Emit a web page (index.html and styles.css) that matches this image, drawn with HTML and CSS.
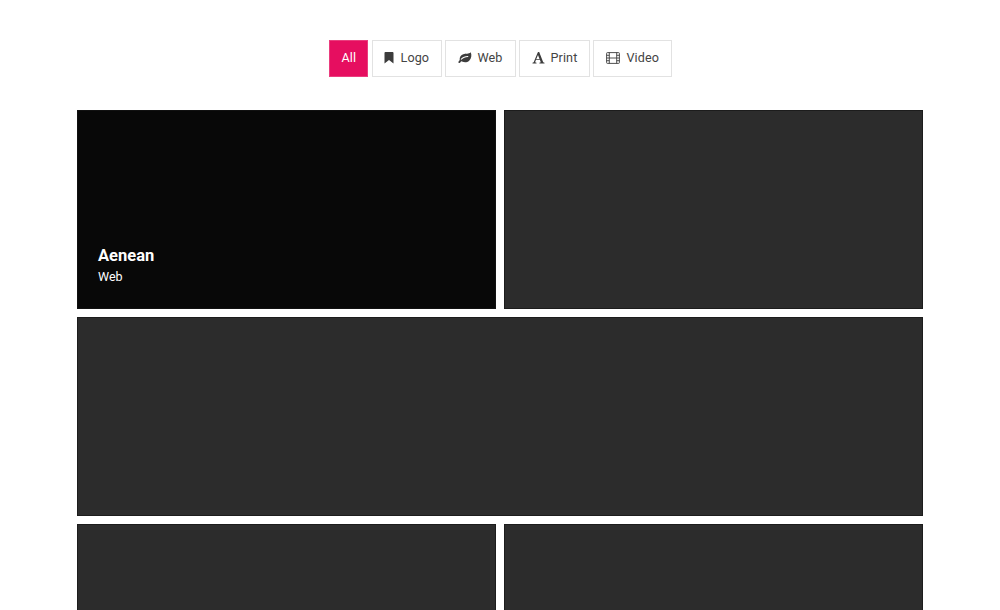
FILE: index.html
```html
<!DOCTYPE html>
<html lang="en">
<head>
<meta charset="utf-8">
<title>Portfolio</title>
<link rel="stylesheet" href="styles.css">
</head>
<body>
<main class="portfolio">
  <nav class="filters">
    <button class="filter filter-all active">All</button>
    <button class="filter filter-logo"><svg class="icon" width="10" height="12" viewBox="0 0 10 12"><path d="M1.400 0h7.200Q9.500 0 9.500 1v10.600L5 8 .5 11.600V1Q.5 0 1.400 0z"/></svg>Logo</button>
    <button class="filter filter-web"><svg class="icon" width="14" height="12" viewBox="0 0 14 12"><path fill-rule="evenodd" d="M12.700.3C13.900 2.800 13.600 6.600 11.200 8.700 9.400 10.300 6.800 10.700 4.600 9.800L3.500 9.300c-.7.300-1.300 1.500-2 1.700-.6.1-1.200-.4-1.100-1 .1-.7 1.100-1.200 1.300-1.900C1.300 5 3 2.900 5.300 2.200 7.700 1.500 10.600 2.400 12.700.3zM3.600 7.500c2-1.700 3.400-2.400 6.300-2.600.7-.1.700-.9 0-.9C6.800 4.100 5 4.900 3 6.800c-.6.6.1 1.200.6.700z"/></svg>Web</button>
    <button class="filter filter-print"><svg class="icon" width="13" height="12" viewBox="0 0 13 12"><path fill-rule="evenodd" d="M6 0h1.200l4 10.200 1.300.5V11.400H7.400v-.7l1.400-.4-.9-2.600H4l-.9 2.500 1.400.5v.7H.5v-.7l1.200-.5L5.300 1.600zM6 2.900 4.300 7h3.200z"/></svg>Print</button>
    <button class="filter filter-video"><svg class="icon" width="14" height="12" viewBox="0 0 14 12"><g class="outline"><rect x=".6" y=".6" width="12.800" height="10.800" rx=".8"/><path d="M3.300.6v10.800M10.700.6v10.800M3.300 6h7.400M.6 3.300h2.700M.6 6h2.700M.6 8.700h2.700M10.700 3.300h2.700M10.700 6h2.700M10.700 8.700h2.700"/></g></svg>Video</button>
  </nav>
  <section class="gallery">
    <article class="tile tile-hover"><h3 class="tile-title">Aenean</h3><p class="tile-category">Web</p></article>
    <article class="tile"></article>
    <article class="tile tile-wide"></article>
    <article class="tile tile-cut"></article>
    <article class="tile tile-cut"></article>
  </section>
</main>
</body>
</html>
```
FILE: styles.css
```css
* { box-sizing: border-box; }
body {
  margin: 0;
  background: #fff;
  color: #444;
  font-family: Roboto, "Liberation Sans", sans-serif;
}
.portfolio { width: 846px; margin: 0 auto; padding-top: 40px; }
.filters { display: flex; justify-content: center; gap: 3px; height: 37px; }
.filter {
  display: flex;
  align-items: center;
  justify-content: flex-start;
  padding: 0 0 1px 12px;
  height: 37px;
  border: 1px solid #e2e2e2;
  background: #fff;
  color: #444;
  font: 400 12.600px/18px Roboto, "Liberation Sans", sans-serif;
  letter-spacing: .1px;
}
.filter-all { width: 39px; margin-right: 1px; }
.filter-logo { width: 70px; padding-left: 11px; }
.filter-web { width: 71px; }
.filter-print { width: 71px; }
.filter-video { width: 79px; }
.active { background: #e60e60; border-color: #ea3d7e; color: #fff; }
.icon { flex: none; margin-right: 6px; fill: #3c3c3c; }
.filter-logo .icon { margin-right: 7px; }
.filter-video .icon { margin-right: 7px; }
.outline { fill: none; stroke: #3c3c3c; stroke-width: .9; }
.gallery {
  display: grid;
  grid-template-columns: 419px 419px;
  grid-template-rows: 199px 199px 86px;
  gap: 8px;
  margin-top: 33px;
}
.tile { background: #2c2c2c; border: 1px solid #1c1c1c; }
.tile-hover {
  display: flex;
  flex-direction: column;
  justify-content: flex-end;
  padding: 0 20px 21px;
  background: #080808;
  border-color: #111;
  color: #fff;
}
.tile-wide { grid-column: 1 / -1; }
.tile-cut { border-bottom: 0; }
.tile-title { margin: 0; font-size: 16.500px; line-height: 22px; font-weight: 700; }
.tile-category { margin: 0; font-size: 12.500px; line-height: 20px; }
```
